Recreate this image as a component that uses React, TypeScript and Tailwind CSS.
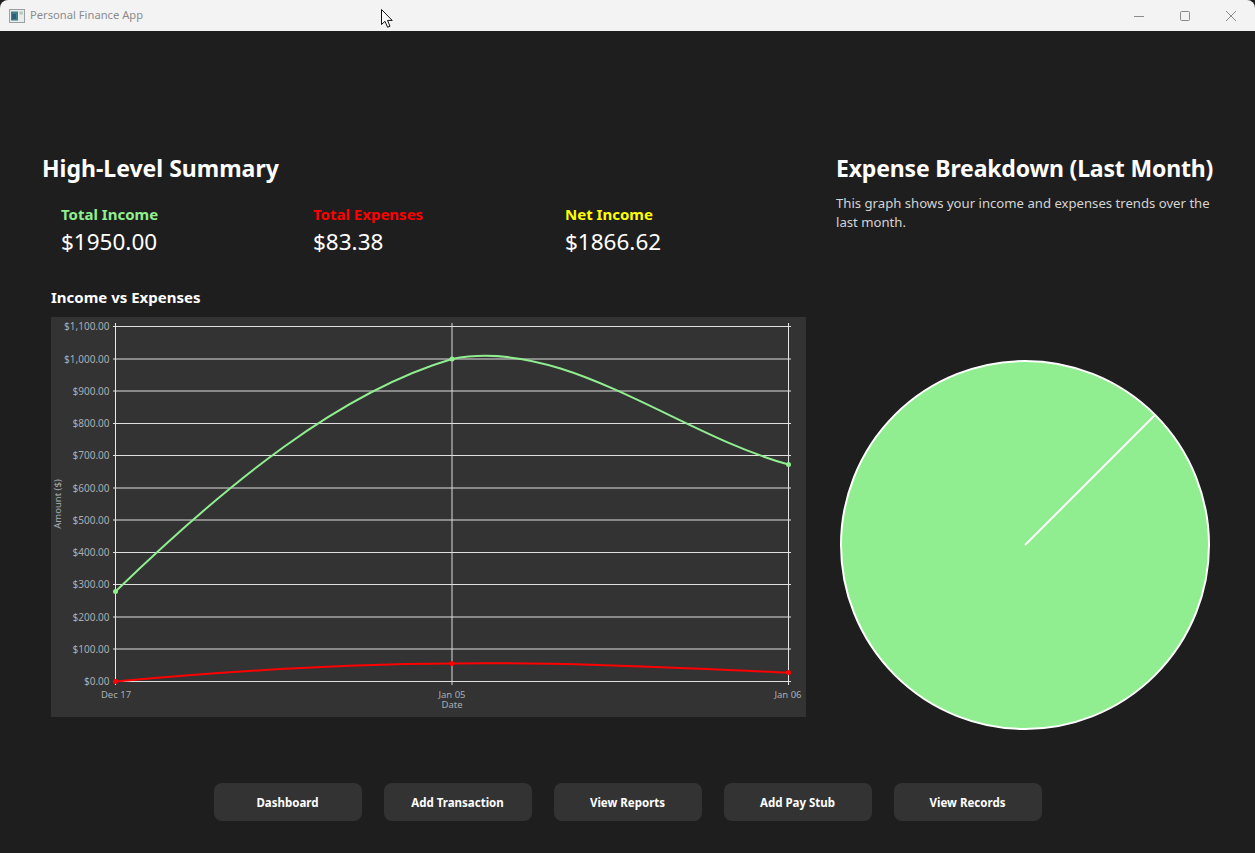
const font = "[font-family:'Noto_Sans',sans-serif]";

const yLabels = ["$1,100.00","$1,000.00","$900.00","$800.00","$700.00","$600.00","$500.00","$400.00","$300.00","$200.00","$100.00","$0.00"];
const ys = [326.5, 359, 391, 423.5, 455.5, 488, 520, 552.5, 584.5, 617, 649, 681.5];

function TitleBar() {
  return (
    <div className="h-[31px] shrink-0 bg-[#f3f3f3] rounded-t-lg flex items-center pl-[9px] relative">
      <svg width="16" height="14" viewBox="0 0 16 14" className="shrink-0">
        <rect x="0.5" y="0.5" width="15" height="13" fill="#e8ecec" stroke="#9aa0a0" />
        <rect x="2" y="2.5" width="7" height="9" fill="#3f7f86" />
        <rect x="3" y="5" width="4" height="5" fill="#2f5f7f" />
        <rect x="10.5" y="2.5" width="3.5" height="3" fill="#b8c8b8" />
      </svg>
      <span className="ml-[5px] text-[11.2px] text-[#8c8c8c]">Personal Finance App</span>
      <div className="ml-auto flex items-center h-full">
        <div className="w-[46px] h-full flex items-center justify-center">
          <svg width="12" height="12" viewBox="0 0 12 12"><path d="M1 6.5h10" stroke="#8a8a8a" strokeWidth="1" /></svg>
        </div>
        <div className="w-[46px] h-full flex items-center justify-center">
          <svg width="12" height="12" viewBox="0 0 12 12"><rect x="1.5" y="1.5" width="9" height="9" rx="1" fill="none" stroke="#8a8a8a" /></svg>
        </div>
        <div className="w-[46px] h-full flex items-center justify-center mr-[1px]">
          <svg width="12" height="12" viewBox="0 0 12 12"><path d="M1 1l10 10M11 1L1 11" stroke="#8a8a8a" strokeWidth="1" /></svg>
        </div>
      </div>
      <svg width="14" height="20" viewBox="0 0 14 20" className="absolute left-[381px] top-[9px]">
        <path d="M0.5 0.5V15.5L4 12.3L6.6 18.3L9 17.2L6.5 11.4H11.2Z" fill="#fff" stroke="#111" strokeWidth="1" strokeLinejoin="round" />
      </svg>
    </div>
  );
}

function Stat({ label, value, color }: { label: string; value: string; color: string }) {
  return (
    <div className="w-[252px] shrink-0">
      <div className={`text-[15px] leading-[20px] font-bold ${color}`}>{label}</div>
      <div className="text-[22.5px] leading-[35px] text-white">{value}</div>
    </div>
  );
}

function LineChart() {
  const textFill = "#a8adb2";
  return (
    <svg width="755" height="400" viewBox="51 317 755 400" className="block bg-[#333333]">
      {ys.map((y, i) => (
        <line key={i} x1="113" x2="791" y1={y} y2={y} stroke="#e0e0e0" strokeWidth="1" />
      ))}
      <line x1="115.5" x2="115.5" y1="323" y2="685" stroke="#e6e6e6" />
      <line x1="452" x2="452" y1="323" y2="685" stroke="#dcdcdc" />
      <line x1="788.5" x2="788.5" y1="323" y2="685" stroke="#e6e6e6" />
      {yLabels.map((l, i) => (
        <text key={l} x="109.5" y={ys[i] + 3.5} textAnchor="end" fontSize="10" fill={textFill}>{l}</text>
      ))}
      <text x="116" y="698" textAnchor="middle" fontSize="9.5" fill={textFill}>Dec 17</text>
      <text x="452" y="698" textAnchor="middle" fontSize="9.5" fill={textFill}>Jan 05</text>
      <text x="788" y="698" textAnchor="middle" fontSize="9.5" fill={textFill}>Jan 06</text>
      <text x="452" y="708" textAnchor="middle" fontSize="9.5" fill={textFill}>Date</text>
      <text x="61" y="504" textAnchor="middle" fontSize="9.5" fill={textFill} transform="rotate(-90 61 504)">Amount ($)</text>
      <path d="M115.5 591.5 C227.5 483 340 392 452 359 C564.5 337 677 434 788.5 464.5" fill="none" stroke="#90ee90" strokeWidth="2" />
      <path d="M115.5 681.5 C230 671 340 664 452 663.5 C560 662 680 668 788.5 672.5" fill="none" stroke="#ff0000" strokeWidth="2" />
      {[[115.5,591.5],[452,359],[788.5,464.5]].map(([x,y]) => <circle key={x} cx={x} cy={y} r="2.5" fill="#90ee90" />)}
      {[[115.5,681.5],[452,663.5],[788.5,672.5]].map(([x,y]) => <circle key={x} cx={x} cy={y} r="2.5" fill="#ff0000" />)}
    </svg>
  );
}

function Pie() {
  return (
    <svg width="372" height="372" viewBox="0 0 372 372" className="block">
      <circle cx="186" cy="186" r="184" fill="#90ee90" stroke="#ffffff" strokeWidth="2" />
      <line x1="186" y1="186" x2="316" y2="56" stroke="#ffffff" strokeWidth="2" />
    </svg>
  );
}

export default function App() {
  return (
    <div className={`w-[1255px] h-[853px] bg-[#1e1e1e] flex flex-col overflow-hidden ${font}`}>
      <TitleBar />
      <div className="flex flex-1 min-h-0">
        <div className="w-[806px] shrink-0 pl-[42px] pt-[122px]">
          <h1 className="text-[23px] leading-[31px] font-bold text-white">High-Level Summary</h1>
          <div className="flex pl-[19px] mt-[20px]">
            <Stat label="Total Income" value="$1950.00" color="text-[#90ee90]" />
            <Stat label="Total Expenses" value="$83.38" color="text-[#ff0000]" />
            <Stat label="Net Income" value="$1866.62" color="text-[#ffff00]" />
          </div>
          <div className="pl-[9px] mt-[28px]">
            <h2 className="text-[15px] leading-[20px] font-bold text-white mb-[10px]">Income vs Expenses</h2>
            <LineChart />
          </div>
        </div>
        <div className="flex-1 pl-[30px] pt-[122px]">
          <h1 className="text-[23px] leading-[31px] font-bold tracking-[-0.17px] text-white whitespace-nowrap">Expense Breakdown (Last Month)</h1>
          <p className="mt-[10px] w-[385px] text-[13.15px] leading-[19px] text-[#d4d4d4]">This graph shows your income and expenses trends over the last month.</p>
          <div className="mt-[127px] ml-[3px]">
            <Pie />
          </div>
        </div>
      </div>
      <div className="h-[70px] shrink-0 flex justify-center gap-[22px] mb-[-38px] relative top-[-38px]">
        {["Dashboard","Add Transaction","View Reports","Add Pay Stub","View Records"].map((t) => (
          <button key={t} className="w-[148px] h-[38px] rounded-lg bg-[#333333] text-white text-[11.5px] font-bold pt-[1px]">{t}</button>
        ))}
      </div>
    </div>
  );
}
